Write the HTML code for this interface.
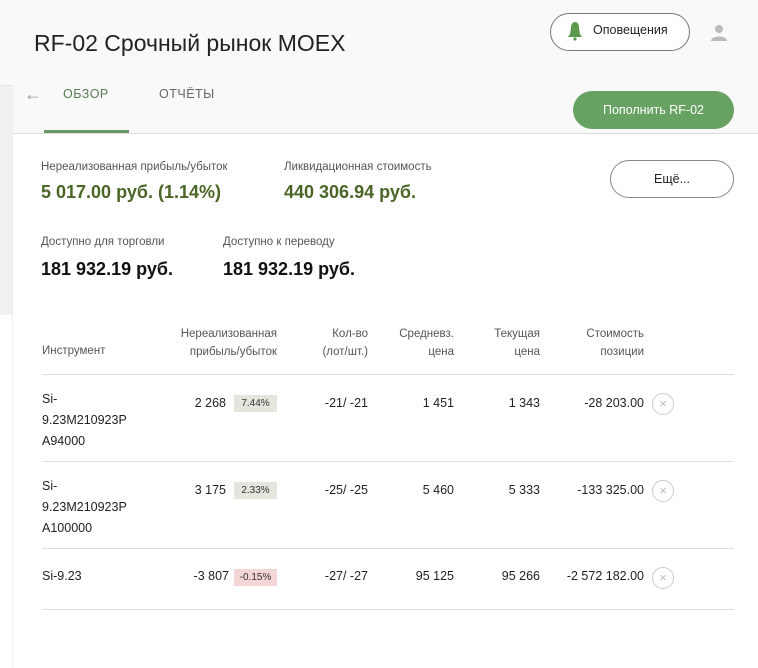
<!DOCTYPE html>
<html><head><meta charset="utf-8"><style>
*{margin:0;padding:0;box-sizing:border-box}
body{width:758px;height:668px;position:relative;background:#fff;font-family:"Liberation Sans",sans-serif;color:#222;overflow:hidden}
.a{position:absolute;white-space:nowrap}
.r{text-align:right}
.h{font-size:11.5px;color:#555;line-height:18px}
.c{font-size:12.5px;color:#222}
.badge{position:absolute;height:17px;font-size:10px;line-height:17px;text-align:center;color:#333}
.x{position:absolute;width:22px;height:22px;border:1px solid #ccc;border-radius:50%;color:#bbb;font-size:13px;line-height:20px;text-align:center}
.line{position:absolute;left:42px;width:692px;height:1px;background:#ddd}
</style></head><body>
<div class="a" style="left:0;top:0;width:758px;height:134px;background:#f9f9f9"></div>
<div class="a" style="left:0;top:85px;width:12px;height:230px;background:#f1f1f1;border-top:1px solid #e4e4e4"></div>
<div class="a" style="left:12px;top:85px;width:1px;height:583px;background:#eee"></div>
<div class="a" style="left:12px;top:133px;width:746px;height:1px;background:#ddd"></div>
<div class="a" style="left:34px;top:30px;font-size:23px;color:#222">RF-02 Срочный рынок MOEX</div>
<div class="a" style="left:550px;top:13px;width:140px;height:38px;border:1px solid #777;border-radius:19px;background:#fff"></div>
<svg class="a" style="left:567px;top:21px" width="16" height="20" viewBox="0 0 16 20"><path d="M8 1 C5 1 4 4 4 7 L3 13 L1 16 L15 16 L13 13 L12 7 C12 4 11 1 8 1Z" fill="#5a9a4f"/><circle cx="8" cy="18" r="1.6" fill="#5a9a4f"/></svg>
<div class="a" style="left:593px;top:23px;font-size:12.5px">Оповещения</div>
<svg class="a" style="left:710px;top:24px" width="18" height="18" viewBox="0 0 18 18"><circle cx="9" cy="5" r="4" fill="#bbb"/><path d="M1 17 C1 11 17 11 17 17Z" fill="#bbb"/></svg>
<div class="a" style="left:24px;top:84px;font-size:18px;color:#999">←</div>
<div class="a" style="left:63px;top:87px;font-size:12.5px;color:#5a7a55;letter-spacing:.5px">ОБЗОР</div>
<div class="a" style="left:159px;top:87px;font-size:12.5px;color:#666;letter-spacing:.5px">ОТЧЁТЫ</div>
<div class="a" style="left:44px;top:130px;width:85px;height:3px;background:#6a9a64"></div>
<div class="a" style="left:573px;top:91px;width:161px;height:38px;border-radius:19px;background:#68a263;color:#fff;font-size:12.5px;line-height:38px;text-align:center">Пополнить RF-02</div>
<div class="a h" style="left:41px;top:158px">Нереализованная прибыль/убыток</div>
<div class="a" style="left:41px;top:182px;font-size:18px;font-weight:bold;color:#4a6626">5 017.00 руб. (1.14%)</div>
<div class="a h" style="left:284px;top:158px">Ликвидационная стоимость</div>
<div class="a" style="left:284px;top:182px;font-size:18px;font-weight:bold;color:#4a6626">440 306.94 руб.</div>
<div class="a" style="left:610px;top:160px;width:124px;height:38px;border:1px solid #888;border-radius:19px;font-size:12.5px;line-height:36px;text-align:center">Ещё...</div>
<div class="a h" style="left:41px;top:233px">Доступно для торговли</div>
<div class="a" style="left:41px;top:259px;font-size:18px;font-weight:bold;color:#111">181 932.19 руб.</div>
<div class="a h" style="left:223px;top:233px">Доступно к переводу</div>
<div class="a" style="left:223px;top:259px;font-size:18px;font-weight:bold;color:#111">181 932.19 руб.</div>

<div class="a h" style="left:42px;top:342px">Инструмент</div>
<div class="a h r" style="right:481px;top:325px">Нереализованная<br>прибыль/убыток</div>
<div class="a h r" style="right:390px;top:325px">Кол-во<br>(лот/шт.)</div>
<div class="a h r" style="right:304px;top:325px">Средневз.<br>цена</div>
<div class="a h r" style="right:218px;top:325px">Текущая<br>цена</div>
<div class="a h r" style="right:114px;top:325px">Стоимость<br>позиции</div>

<div class="line" style="top:374px"></div>
<div class="a c" style="left:42px;top:389px;line-height:21px">Si-<br>9.23M210923P<br>A94000</div>
<div class="a c r" style="right:532px;top:396px">2 268</div>
<div class="badge" style="left:234px;top:395px;width:43px;background:#e3e6dc">7.44%</div>
<div class="a c r" style="right:390px;top:396px">-21/ -21</div>
<div class="a c r" style="right:304px;top:396px">1 451</div>
<div class="a c r" style="right:218px;top:396px">1 343</div>
<div class="a c r" style="right:114px;top:396px">-28 203.00</div>
<div class="x" style="left:652px;top:393px">×</div>

<div class="line" style="top:461px"></div>
<div class="a c" style="left:42px;top:476px;line-height:21px">Si-<br>9.23M210923P<br>A100000</div>
<div class="a c r" style="right:532px;top:483px">3 175</div>
<div class="badge" style="left:234px;top:482px;width:43px;background:#e3e6dc">2.33%</div>
<div class="a c r" style="right:390px;top:483px">-25/ -25</div>
<div class="a c r" style="right:304px;top:483px">5 460</div>
<div class="a c r" style="right:218px;top:483px">5 333</div>
<div class="a c r" style="right:114px;top:483px">-133 325.00</div>
<div class="x" style="left:652px;top:480px">×</div>

<div class="line" style="top:548px"></div>
<div class="a c" style="left:42px;top:569px">Si-9.23</div>
<div class="a c r" style="right:529px;top:569px">-3 807</div>
<div class="badge" style="left:234px;top:569px;width:43px;background:#f5d6d6">-0.15%</div>
<div class="a c r" style="right:390px;top:569px">-27/ -27</div>
<div class="a c r" style="right:304px;top:569px">95 125</div>
<div class="a c r" style="right:218px;top:569px">95 266</div>
<div class="a c r" style="right:114px;top:569px">-2 572 182.00</div>
<div class="x" style="left:652px;top:567px">×</div>
<div class="line" style="top:609px"></div>
</body></html>
